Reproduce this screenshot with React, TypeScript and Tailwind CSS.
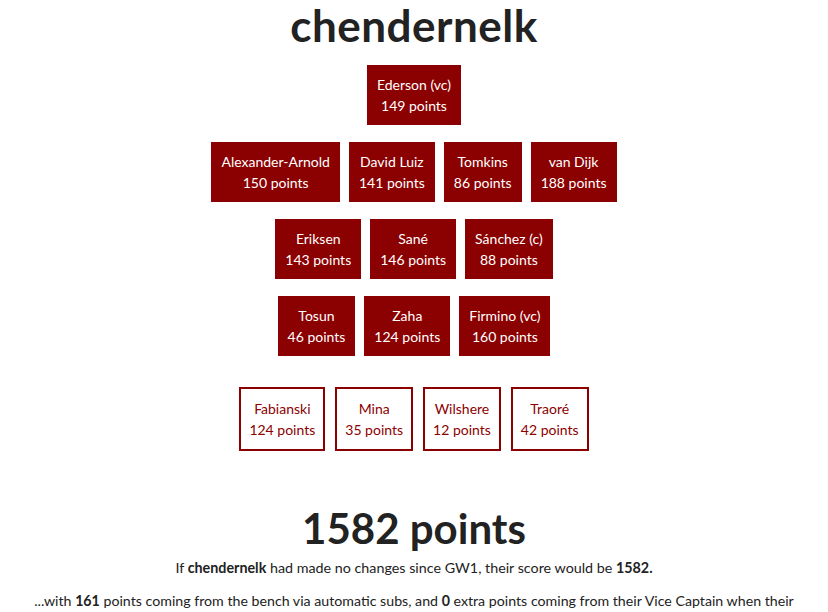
type Player = {
  name: string;
  points: number;
};

const starters: Player[][] = [
  [{ name: "Ederson (vc)", points: 149 }],
  [
    { name: "Alexander-Arnold", points: 150 },
    { name: "David Luiz", points: 141 },
    { name: "Tomkins", points: 86 },
    { name: "van Dijk", points: 188 }
  ],
  [
    { name: "Eriksen", points: 143 },
    { name: "Sané", points: 146 },
    { name: "Sánchez (c)", points: 88 }
  ],
  [
    { name: "Tosun", points: 46 },
    { name: "Zaha", points: 124 },
    { name: "Firmino (vc)", points: 160 }
  ]
];

const bench: Player[] = [
  { name: "Fabianski", points: 124 },
  { name: "Mina", points: 35 },
  { name: "Wilshere", points: 12 },
  { name: "Traoré", points: 42 }
];

function PlayerCard({ player, isBench }: { player: Player; isBench?: boolean }) {
  return (
    <div
      className={
        isBench
          ? "border-2 border-[#8b0000] bg-white px-[8px] py-[9px] text-[14px] leading-[21px] text-[#8b0000]"
          : "bg-[#8b0000] px-[10px] py-[9px] text-[14px] leading-[21px] text-white"
      }
    >
      <div>{player.name}</div>
      <div>{player.points} points</div>
    </div>
  );
}

export default function App() {
  return (
    <div className="min-h-screen bg-white text-center font-['Lato','Open_Sans',sans-serif] text-[#222]">
      <h1 className="pt-[5px] text-[44px] font-bold leading-[40px] tracking-[0.5px]">chendernelk</h1>

      <div className="mt-[20px] flex flex-col gap-[17px]">
        {starters.map((row, index) => (
          <div key={index} className="flex justify-center gap-[9px]">
            {row.map((player) => (
              <PlayerCard key={player.name} player={player} />
            ))}
          </div>
        ))}
      </div>

      <div className="mt-[31px] flex justify-center gap-[10px]">
        {bench.map((player) => (
          <PlayerCard key={player.name} player={player} isBench />
        ))}
      </div>

      <h2 className="mt-[53px] text-[42px] font-bold leading-[48px]">1582 points</h2>

      <p className="mt-[4px] text-[14.3px] leading-[24px]">
        If <b>chendernelk</b> had made no changes since GW1, their score would be <b>1582.</b>
      </p>

      <p className="mt-[9px] px-[20px] text-[14.2px] leading-[24px]">
        ...with <b>161</b> points coming from the bench via automatic subs, and <b>0</b> extra
        points coming from their Vice Captain when their Captain didn't play.
      </p>
    </div>
  );
}
